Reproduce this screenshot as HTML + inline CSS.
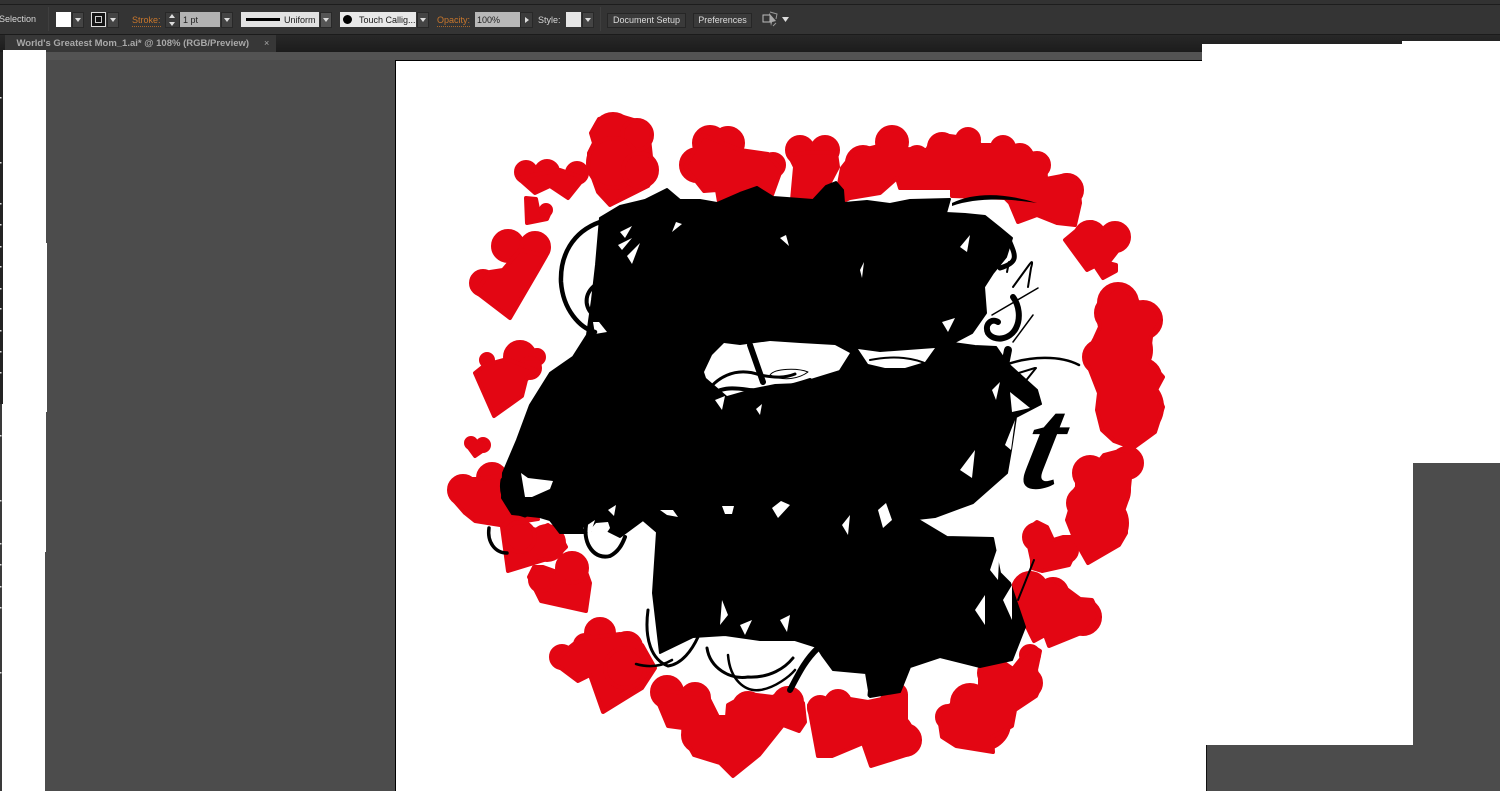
<!DOCTYPE html>
<html><head><meta charset="utf-8"><style>
html,body{margin:0;padding:0;width:1500px;height:791px;overflow:hidden;background:#4c4c4c}
*{box-sizing:border-box}
#r{position:relative;width:1500px;height:791px;overflow:hidden;font-family:"Liberation Sans",sans-serif}
.a{position:absolute}
.t{position:absolute;font-size:9px;line-height:12px;color:#d6d6d6;white-space:nowrap}
.o{position:absolute;font-size:9px;line-height:12px;color:#c9772c;white-space:nowrap;border-bottom:1px dotted #a8652a}
.d{position:absolute;top:12px;height:16px;background:#444;border:1px solid #282828}
.d:after{content:"";position:absolute;left:50%;top:5px;margin-left:-3px;border-left:3px solid transparent;border-right:3px solid transparent;border-top:4px solid #ddd}
.b{position:absolute;top:13px;height:15px;background:#3a3a3a;border:1px solid #262626;color:#dcdcdc;font-size:9px;line-height:13px;text-align:center;white-space:nowrap}
</style></head><body><div id="r">
<div class="a" style="left:0;top:0;width:1500px;height:4px;background:#323232"></div>
<div class="a" style="left:0;top:4px;width:1500px;height:1px;background:#1d1d1d"></div>
<div class="a" style="left:0;top:5px;width:1500px;height:29px;background:#343434"></div>
<div class="a" style="left:0;top:34px;width:1500px;height:1px;background:#1b1b1b"></div>
<div class="a" style="left:0;top:35px;width:1500px;height:17px;background:linear-gradient(#282828,#1c1c1c)"></div>
<div class="a" style="left:5px;top:35px;width:271px;height:17px;background:#373737"></div>
<div class="a" style="left:0;top:52px;width:1500px;height:8px;background:#535353"></div>
<div class="a" style="left:0;top:60px;width:1500px;height:731px;background:#4c4c4c"></div>
<div class="a" style="left:0;top:52px;width:3px;height:352px;background:#232323"></div>
<div class="a" style="left:0;top:404px;width:2px;height:387px;background:#3a3a3a"></div>

<div class="t" style="left:-1px;top:13px;font-size:9px">Selection</div>
<div class="a" style="left:48px;top:7px;width:1px;height:24px;background:#3f3f3f"></div>
<div class="a" style="left:56px;top:12px;width:15px;height:15px;background:#fff"></div>
<div class="d" style="left:72px;width:12px"></div>
<div class="a" style="left:91px;top:12px;width:15px;height:15px;background:#141414;border:1px solid #ddd"></div>
<div class="a" style="left:95px;top:16px;width:7px;height:7px;border:1px solid #ccc"></div>
<div class="d" style="left:107px;width:12px"></div>
<div class="o" style="left:132px;top:14px">Stroke:</div>
<div class="a" style="left:165px;top:12px;width:15px;height:16px;background:#3c3c3c;border:1px solid #282828"></div>
<div class="a" style="left:169px;top:14px;border-left:3px solid transparent;border-right:3px solid transparent;border-bottom:4px solid #ddd"></div>
<div class="a" style="left:169px;top:22px;border-left:3px solid transparent;border-right:3px solid transparent;border-top:4px solid #ddd"></div>
<div class="a" style="left:180px;top:12px;width:40px;height:15px;background:#b2b2b2"></div>
<div class="t" style="left:183px;top:14px;color:#222">1 pt</div>
<div class="d" style="left:221px;width:12px"></div>
<div class="a" style="left:241px;top:12px;width:78px;height:15px;background:#e2e2e2"></div>
<div class="a" style="left:246px;top:18px;width:34px;height:3px;background:#000"></div>
<div class="t" style="left:284px;top:14px;color:#1a1a1a">Uniform</div>
<div class="d" style="left:320px;width:12px;background:#555"></div>
<div class="a" style="left:340px;top:12px;width:76px;height:15px;background:#e8e8e8"></div>
<div class="a" style="left:343px;top:15px;width:9px;height:9px;border-radius:50%;background:#000"></div>
<div class="t" style="left:359px;top:14px;color:#1a1a1a">Touch Callig...</div>
<div class="d" style="left:417px;width:12px"></div>
<div class="o" style="left:437px;top:14px">Opacity:</div>
<div class="a" style="left:475px;top:12px;width:45px;height:15px;background:#b8b8b8"></div>
<div class="t" style="left:477px;top:14px;color:#222">100%</div>
<div class="a" style="left:520px;top:12px;width:13px;height:16px;background:#3c3c3c;border:1px solid #282828"></div>
<div class="a" style="left:525px;top:17px;border-top:3px solid transparent;border-bottom:3px solid transparent;border-left:4px solid #ddd"></div>
<div class="t" style="left:538px;top:14px">Style:</div>
<div class="a" style="left:566px;top:12px;width:15px;height:15px;background:#e6e6e6"></div>
<div class="d" style="left:582px;width:12px"></div>
<div class="a" style="left:600px;top:7px;width:1px;height:24px;background:#3f3f3f"></div>
<div class="b" style="left:607px;width:79px">Document Setup</div>
<div class="b" style="left:693px;width:59px">Preferences</div>
<svg class="a" style="left:760px;top:10px" width="32" height="20"><rect x="3" y="5" width="7" height="7" fill="none" stroke="#bbb"/><path d="M9 3l7 8-4 1-1 4z" fill="#aaa"/><path d="M10 2l7 2-1 5M16 13l-3 3" stroke="#999" fill="none"/><path d="M22 7h7l-3.500 5z" fill="#ddd"/></svg>
<div class="t" style="left:16.500px;top:38px;font-size:9.500px;font-weight:bold;color:#a9a9a9">World's Greatest Mom_1.ai* @ 108% (RGB/Preview)</div>
<div class="t" style="left:264px;top:37px;color:#aaa">×</div>

<!-- white patches -->
<div class="a" style="left:3px;top:50px;width:43px;height:193px;background:#fff"></div>
<div class="a" style="left:3px;top:243px;width:44px;height:161px;background:#fff"></div>
<div class="a" style="left:2px;top:404px;width:45px;height:8px;background:#fff"></div>
<div class="a" style="left:2px;top:412px;width:43.500px;height:140px;background:#fff"></div>
<div class="a" style="left:2px;top:552px;width:42.500px;height:239px;background:#fff"></div>
<svg class="a" style="left:0;top:0" width="4" height="791" fill="#ddd"><rect y="97" width="1.500" height="1.500"/><rect y="162" width="1.500" height="1.500"/><rect y="203" width="1.500" height="1.500"/><rect y="224" width="1.500" height="1.500"/><rect y="246" width="1.500" height="1.500"/><rect y="266" width="1.500" height="1.500"/><rect y="288" width="1.500" height="1.500"/><rect y="308" width="1.500" height="1.500"/><rect y="330" width="1.500" height="1.500"/><rect y="351" width="1.500" height="1.500"/><rect y="372" width="1.500" height="1.500"/><rect y="435" width="1.500" height="1.500"/><rect y="500" width="1.500" height="1.500"/><rect y="543" width="1.500" height="1.500"/><rect y="564" width="1.500" height="1.500"/><rect y="586" width="1.500" height="1.500"/><rect y="607" width="1.500" height="1.500"/><rect y="672" width="1.500" height="1.500"/></svg>
<div class="a" style="left:395px;top:60px;width:810px;height:731px;background:#000"></div>
<div class="a" style="left:396px;top:61px;width:810px;height:730px;background:#fff"></div>
<div class="a" style="left:1202px;top:44px;width:298px;height:419px;background:#fff"></div>
<div class="a" style="left:1402px;top:41px;width:98px;height:5px;background:#fff"></div>
<div class="a" style="left:1202px;top:43px;width:200px;height:1px;background:#222"></div>
<div class="a" style="left:1202px;top:463px;width:211px;height:283px;background:#fff"></div>
<div class="a" style="left:1206px;top:745px;width:207px;height:46px;background:#4c4c4c;border-left:1px solid #111"></div>

<svg class="a" style="left:0;top:0" width="1500" height="791" viewBox="0 0 1500 791">
<g fill="#e30613" stroke="#e30613" stroke-width="4" stroke-linejoin="round">
<polygon points="591,133 599,119 617,115 637,121 648,129 651,157 656,172 648,186 610,205 598,192 589,167 589,153 594,143"/>
<circle cx="526" cy="172" r="10"/><circle cx="547" cy="172" r="11"/><circle cx="577" cy="173" r="10"/>
<polygon points="518,178 535,193 550,186 568,198 584,178 560,170"/>
<polygon points="526,198 536,199 538,209 550,212 547,219 527,223"/><circle cx="546" cy="210" r="5"/>
<circle cx="508" cy="246" r="15"/><circle cx="535" cy="247" r="14"/><circle cx="483" cy="283" r="12"/>
<polygon points="476,292 510,318 538,270 546,256 520,250 503,270 490,272"/>
<circle cx="487" cy="360" r="6"/><circle cx="520" cy="357" r="15"/><circle cx="537" cy="357" r="7"/><circle cx="530" cy="368" r="10"/>
<polygon points="475,373 494,416 522,396 526,380 535,370 507,359 485,365"/>
<circle cx="471" cy="443" r="5"/><circle cx="483" cy="445" r="6"/><polygon points="467,445 475,456 488,447 478,442"/>
<circle cx="463" cy="490" r="14"/><circle cx="492" cy="478" r="14"/>
<polygon points="451,497 465,513 475,521 500,525 538,519 507,503 503,475 480,479 460,479"/>
<polygon points="502,527 508,571 557,556 566,547 559,534 548,525 537,530 507,522"/><circle cx="547" cy="543" r="17"/><circle cx="520" cy="537" r="15"/>
<polygon points="529,577 541,601 586,611 590,583 581,558 572,553 560,561 557,572 543,567 534,567"/><circle cx="572" cy="568" r="15"/><circle cx="541" cy="580" r="11"/>
<circle cx="562" cy="657" r="11"/><circle cx="600" cy="633" r="14"/><circle cx="627" cy="647" r="14"/><circle cx="585" cy="645" r="10"/>
<polygon points="554,663 578,681 590,675 603,712 642,688 655,668 642,645 620,634 580,639 570,647"/><circle cx="625" cy="668" r="20"/>
<circle cx="667" cy="692" r="15"/><circle cx="695" cy="698" r="14"/><circle cx="748" cy="707" r="14"/><circle cx="788" cy="702" r="14"/><circle cx="700" cy="735" r="17"/><circle cx="745" cy="735" r="22"/>
<polygon points="653,690 668,726 683,728 684,737 694,755 720,763 733,776 759,755 783,725 799,731 805,722 803,703 788,688 773,697 748,694 728,705 727,717 718,717 707,695"/>
<circle cx="820" cy="708" r="11"/><circle cx="838" cy="703" r="12"/><circle cx="895" cy="695" r="11"/><circle cx="905" cy="740" r="15"/><circle cx="890" cy="735" r="22"/>
<polygon points="809,707 818,756 832,756 863,743 871,766 906,755 920,740 906,720 906,695 895,685 885,690 882,699 868,702 850,699 837,692 825,700 809,705"/>
<circle cx="993" cy="673" r="14"/><circle cx="1030" cy="655" r="9"/><circle cx="1027" cy="683" r="14"/><circle cx="970" cy="703" r="18"/><circle cx="948" cy="717" r="11"/><circle cx="983" cy="723" r="26"/>
<polygon points="939,717 942,737 956,746 993,752 992,737 1012,726 1015,710 1036,696 1040,687 1036,670 1040,651 1033,647 1024,655 1013,669 1000,660 986,662 980,673 980,687 961,692 951,705 942,709"/>
<circle cx="1030" cy="590" r="17"/><circle cx="1053" cy="593" r="14"/><circle cx="1083" cy="617" r="17"/><circle cx="1050" cy="610" r="22"/>
<polygon points="1013,597 1031,635 1034,641 1045,635 1049,646 1086,631 1100,617 1092,600 1080,599 1053,579 1042,582 1030,572 1019,581"/>
<circle cx="1037" cy="537" r="13"/><circle cx="1065" cy="550" r="12"/>
<polygon points="1027,537 1032,560 1032,568 1042,571 1069,565 1076,550 1072,537 1063,537 1053,540 1047,527 1037,522 1029,528"/>
<circle cx="1090" cy="473" r="16"/><circle cx="1127" cy="463" r="15"/><circle cx="1083" cy="503" r="15"/><circle cx="1100" cy="523" r="27"/><circle cx="1105" cy="490" r="24"/>
<polygon points="1067,520 1075,540 1088,563 1119,545 1126,533 1126,522 1121,517 1128,497 1130,478 1141,463 1138,455 1123,450 1104,455 1100,460 1084,460 1077,473 1077,487 1070,497 1070,510"/>
<circle cx="1118" cy="303" r="19"/><circle cx="1143" cy="320" r="18"/><circle cx="1113" cy="313" r="17"/><circle cx="1100" cy="357" r="16"/><circle cx="1143" cy="377" r="17"/><circle cx="1133" cy="407" r="29"/><circle cx="1125" cy="350" r="26"/>
<polygon points="1118,285 1132,295 1140,304 1152,305 1161,320 1151,337 1148,360 1163,377 1156,390 1163,407 1155,432 1133,448 1114,441 1102,430 1097,410 1099,393 1085,357 1095,338 1100,327 1097,313 1102,298"/>
<circle cx="1090" cy="237" r="15"/><circle cx="1115" cy="237" r="14"/>
<polygon points="1077,230 1065,240 1087,270 1095,266 1103,278 1116,271 1116,265 1108,263 1126,240 1126,229 1117,224 1103,229 1092,222"/>
<circle cx="892" cy="142" r="15"/><circle cx="942" cy="147" r="13"/><circle cx="968" cy="140" r="11"/><circle cx="1003" cy="148" r="11"/><circle cx="1020" cy="157" r="12"/><circle cx="1037" cy="165" r="12"/><circle cx="1067" cy="190" r="15"/><circle cx="863" cy="163" r="16"/><circle cx="917" cy="157" r="10"/>
<polygon points="842,168 853,154 867,149 879,146 879,135 890,129 905,135 906,149 927,150 934,137 942,135 957,137 968,130 976,137 980,145 993,145 1003,139 1013,145 1030,152 1045,159 1046,179 1067,175 1078,185 1080,203 1075,225 1057,223 1037,215 1018,222 1010,203 1005,198 952,196 952,188 900,188 897,178 880,193 850,198 835,205"/>
<circle cx="800" cy="150" r="13"/><circle cx="825" cy="150" r="13"/>
<polygon points="789,155 795,167 792,200 820,201 838,167 836,153 812,152"/>
<circle cx="613" cy="133" r="19"/><circle cx="637" cy="135" r="15"/><circle cx="613" cy="163" r="25"/><circle cx="640" cy="170" r="17"/>
<circle cx="710" cy="143" r="16"/><circle cx="728" cy="143" r="15"/><circle cx="697" cy="165" r="16"/><circle cx="740" cy="170" r="19"/><circle cx="773" cy="165" r="11"/>
<polygon points="704,191 717,190 720,208 740,205 772,195 781,170 768,154 740,150 703,135 685,167"/>
</g>

<g fill="#000" stroke="#000" stroke-width="2" stroke-linejoin="round">
<polygon points="600,218 620,206 645,200 667,189 680,200 700,200 717,203 740,193 757,187 773,197 787,198 813,200 826,186 836,182 843,190 844,203 867,201 890,204 910,200 950,199 946,213 965,214 985,216 1000,228 1012,238 1006,257 993,273 984,287 986,313 972,333 953,343 975,346 996,347 1007,363 1037,390 1041,404 1016,417 1011,450 1007,473 973,503 935,517 917,519 947,537 993,538 1000,573 1010,583 1025,627 1012,660 980,667 940,657 910,667 900,692 870,697 866,673 833,670 822,655 817,647 795,640 760,640 725,635 693,637 660,653 653,593 657,532 643,520 620,537 600,527 585,533 560,533 550,520 540,517 512,514 502,498 503,473 517,440 530,405 550,373 573,357 587,335 592,300 596,265"/>
</g>

<!-- white gaps in the mass -->
<g fill="#fff">
<polygon points="724,343 740,345 770,341 800,343 835,345 850,353 838,372 820,378 800,383 775,384 755,388 727,396 706,378 704,372 712,355"/>
<polygon points="858,349 880,352 935,348 925,362 905,368 885,368 868,364"/>
<polygon points="521,473 528,478 553,481 550,489 532,497 525,497"/>
<polygon points="608,522 610,528 606,534 597,538 590,530 596,523"/>
<polygon points="722,506 734,506 732,514 725,514"/>
<polygon points="781,501 790,505 778,518 772,508"/>
<polygon points="660,510 673,510 678,517 667,515"/>
<polygon points="560,225 572,223 580,235 575,245 566,248"/>
<polygon points="593,322 599,322 607,332 595,334"/>
<polygon points="620,232 632,226 625,238"/><polygon points="618,245 632,238 622,250"/>
<polygon points="627,256 640,243 632,264"/><polygon points="676,222 682,224 672,232"/>
<polygon points="786,235 789,246 780,238"/><polygon points="960,247 970,235 967,252"/>
<polygon points="860,270 864,262 862,278"/><polygon points="942,322 955,318 948,332"/>
<polygon points="715,400 725,396 722,410"/><polygon points="756,409 762,404 760,415"/>
<polygon points="1010,392 1030,408 1012,412"/>
<polygon points="722,600 728,615 720,625"/><polygon points="740,625 752,620 745,635"/>
<polygon points="780,620 790,615 787,632"/><polygon points="842,525 850,515 848,535"/>
<polygon points="878,510 886,503 892,520 883,528"/><polygon points="992,390 1000,382 996,400"/>
<polygon points="960,470 975,450 972,478"/><polygon points="1005,445 1015,420 1011,450"/>
<polygon points="990,570 1000,540 998,580"/><polygon points="975,610 985,595 985,625"/>
<polygon points="1003,600 1012,585 1012,620"/><polygon points="583,528 595,520 590,535"/>
<polygon points="608,510 616,505 614,516"/>
</g>
<g fill="none" stroke="#000" stroke-linecap="round" stroke-linejoin="round">
<path d="M600 222C572 232 560 256 561 282C563 310 580 328 595 332" stroke-width="4.500"/>
<path d="M598 283C584 292 584 305 592 314" stroke-width="4"/>
<path d="M503 480C500 497 510 511 525 515" stroke-width="5"/>
<path d="M489 528C487 542 495 553 507 553" stroke-width="3.500"/>
<path d="M586 525C583 545 595 560 610 556C618 552 622 545 625 537" stroke-width="4"/>
<path d="M648 610C644 640 652 660 668 666C682 664 692 650 698 637" stroke-width="3"/>
<path d="M707 648C710 668 730 680 748 677C770 678 785 668 793 658" stroke-width="3"/>
<path d="M728 655C730 680 745 692 760 690C775 688 790 676 795 670" stroke-width="2.500"/>
<path d="M636 664C650 668 662 666 672 660" stroke-width="2.500"/>
<path d="M705 395C715 378 735 366 760 375C775 378 785 378 795 374" stroke-width="3"/>
<path d="M705 400C720 385 735 388 750 390C770 392 795 385 810 380" stroke-width="4"/>
<path d="M750 345L763 382" stroke-width="6"/>
<path d="M770 375C775 368 798 368 808 372C800 378 785 382 770 375z" stroke-width="1"/>
<path d="M798 385L840 372" stroke-width="4"/>
<path d="M870 360C895 355 915 358 929 365" stroke-width="2"/>
<path d="M1005 365C1030 356 1060 355 1079 365" stroke-width="2.500"/>
<path d="M790 690C798 675 805 660 818 648" stroke-width="6"/>
<path d="M870 695C870 685 880 672 890 668" stroke-width="5"/>
<path d="M1034 560L1018 600" stroke-width="2"/>
<path d="M1009 240C1015 255 1020 262 1000 268" stroke-width="5"/>
<path d="M1013 287L1029 265Q1034 258 1031 268L1028 287" stroke-width="2"/>
<path d="M992 315L1038 288" stroke-width="1.500"/>
<path d="M1013 297C1019 305 1021 318 1016 328C1010 340 994 342 988 333C984 324 992 318 998 322" stroke-width="6"/>
<path d="M1013 342L1033 315" stroke-width="1.500"/>
<path d="M1009 262L1007 272" stroke-width="2"/>
<path d="M1008 350L1003 375" stroke-width="8"/>
<path d="M1012 375L1035 368" stroke-width="2"/>
<path d="M1024 383L1036 368" stroke-width="2"/>
</g>
<path d="M952 203C975 192 1005 193 1037 203C1005 198 975 198 952 206z" fill="#000"/>
<text x="0" y="0" transform="translate(1017,488) skewX(-12)" font-family="'Liberation Serif',serif" font-style="italic" font-weight="bold" font-size="132" fill="#000">t</text>
</svg>
</div></body></html>
